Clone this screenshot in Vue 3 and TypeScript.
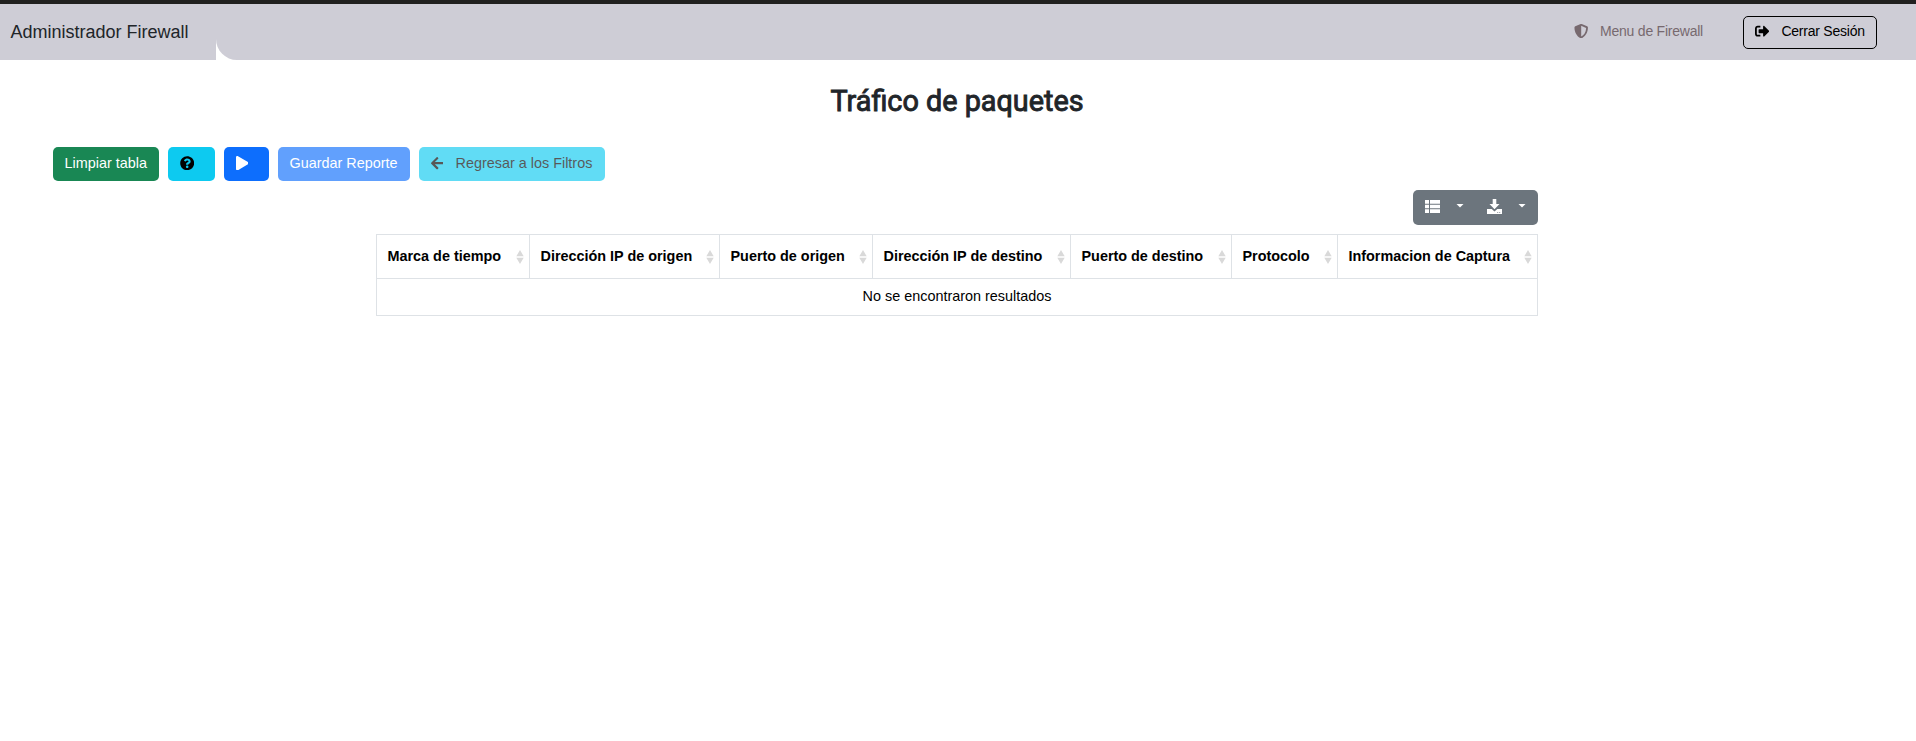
<script setup lang="ts">
const columns: { label: string; width: number }[] = [
  { label: 'Marca de tiempo', width: 153 },
  { label: 'Dirección IP de origen', width: 190 },
  { label: 'Puerto de origen', width: 153 },
  { label: 'Dirección IP de destino', width: 198 },
  { label: 'Puerto de destino', width: 161 },
  { label: 'Protocolo', width: 106 },
  { label: 'Informacion de Captura', width: 200 },
]
</script>

<template>
  <div class="page">
    <header class="topbar">
      <div class="brand">Administrador Firewall</div>
      <div class="nav-wrap">
        <nav class="nav">
          <a class="nav-link">
            <svg class="icon" viewBox="0 0 512 512"><path d="M466.500 83.700l-192-80a48.150 48.150 0 0 0-36.900 0l-192 80C27.700 91.100 16 108.600 16 128c0 198.500 114.500 335.700 221.500 380.300 11.800 4.900 25.100 4.900 36.900 0C360.100 472.600 496 349.300 496 128c0-19.400-11.700-36.900-29.500-44.300zM256.100 446.300l-.1-381 175.900 73.300c-3.300 151.400-82.100 261.100-175.800 307.700z" /></svg>
            <span>Menu de Firewall</span>
          </a>
          <button class="btn logout">
            <svg class="icon" viewBox="0 0 512 512"><path d="M497 273L329 441c-15 15-41 4.500-41-17v-96H152c-13.300 0-24-10.700-24-24v-96c0-13.300 10.700-24 24-24h136V88c0-21.400 25.900-32 41-17l168 168c9.300 9.400 9.300 24.600 0 34zM192 436v-40c0-6.600-5.400-12-12-12H96c-17.700 0-32-14.300-32-32V160c0-17.700 14.300-32 32-32h84c6.600 0 12-5.400 12-12V76c0-6.600-5.400-12-12-12H96c-53 0-96 43-96 96v192c0 53 43 96 96 96h84c6.600 0 12-5.400 12-12z" /></svg>
            <span>Cerrar Sesión</span>
          </button>
        </nav>
      </div>
    </header>

    <h1 class="title">Tráfico de paquetes</h1>

    <div class="actions">
      <button class="btn success">Limpiar tabla</button>
      <button class="btn info help" aria-label="Ayuda">
        <svg class="icon" viewBox="0 0 512 512"><path d="M504 256c0 136.997-111.043 248-248 248S8 392.997 8 256C8 119.083 119.043 8 256 8s248 111.083 248 248zM262.655 90c-54.497 0-89.255 22.957-116.549 63.758-3.536 5.286-2.353 12.415 2.715 16.258l34.699 26.310c5.205 3.947 12.621 3.008 16.665-2.122 17.864-22.658 30.113-35.797 57.303-35.797 20.429 0 45.698 13.148 45.698 32.958 0 14.976-12.363 22.667-32.534 33.976C247.128 238.528 216 254.941 216 296v4c0 6.627 5.373 12 12 12h56c6.627 0 12-5.373 12-12v-1.333c0-28.462 83.186-29.647 83.186-106.667 0-58.002-60.165-102-116.531-102zM256 338c-25.365 0-46 20.635-46 46 0 25.364 20.635 46 46 46s46-20.636 46-46c0-25.364-20.635-46-46-46z" /></svg>
      </button>
      <button class="btn primary play" aria-label="Iniciar">
        <svg class="icon play-icon" viewBox="0 0 448 512"><path d="M424.400 214.700L72.400 6.600C43.800-10.300 0 6.100 0 47.900V464c0 37.500 40.700 60.100 72.400 41.300l352-208c31.400-18.500 31.500-64.100 0-82.600z" /></svg>
      </button>
      <button class="btn primary save" disabled>Guardar Reporte</button>
      <button class="btn info back" disabled>
        <svg class="icon back-icon" viewBox="0 0 448 512"><path d="M257.500 445.100l-22.200 22.200c-9.400 9.400-24.600 9.400-33.900 0L7 273c-9.400-9.400-9.400-24.600 0-33.900L201.400 44.700c9.400-9.400 24.600-9.400 33.900 0l22.200 22.200c9.500 9.500 9.300 25-.4 34.300L136.600 216H424c13.300 0 24 10.700 24 24v32c0 13.300-10.700 24-24 24H136.600l120.500 114.800c9.800 9.300 10 24.800.4 34.300z" /></svg>
        <span>Regresar a los Filtros</span>
      </button>
    </div>

    <main class="table-area">
      <div class="toolbar">
        <div class="tool-group">
          <button class="tool" aria-label="Columnas">
            <svg class="tool-icon" viewBox="0 0 15 14"><path d="M0 .5h4v3.700H0zM5 .5h10v3.700H5zM0 5.200h4v3.600H0zM5 5.200h10v3.600H5zM0 9.800h4v3.700H0zM5 9.800h10v3.700H5z" /></svg>
            <span class="caret"></span>
          </button>
          <button class="tool" aria-label="Exportar">
            <svg class="tool-icon" viewBox="0 0 15 15"><path d="M5.700 0h3.600v5h3.200L7.500 10.300 2.500 5h3.200zM0 10h4.700l2.800 2.600L10.300 10H15v5H0zM10.200 12.900v.8h1v-.8zm2 0v.8h1v-.8z" fill-rule="evenodd" /></svg>
            <span class="caret"></span>
          </button>
        </div>
      </div>
      <table class="table">
        <colgroup>
          <col v-for="c in columns" :key="c.label" :style="{ width: c.width + 'px' }" />
        </colgroup>
        <thead>
          <tr>
            <th v-for="c in columns" :key="c.label">
              <div class="th-inner">
                <span>{{ c.label }}</span>
                <svg class="sort" viewBox="0 0 8 14"><path d="M4 0L7.700 6.300H.3zM4 14L.3 7.700h7.400z" /></svg>
              </div>
            </th>
          </tr>
        </thead>
        <tbody>
          <tr>
            <td :colspan="columns.length">No se encontraron resultados</td>
          </tr>
        </tbody>
      </table>
    </main>
  </div>
</template>

<style>
body {
  margin: 0;
  background: #fff;
}
</style>

<style scoped>
.page,
.page * {
  box-sizing: border-box;
}
.page {
  min-height: 741px;
  font-family: 'Liberation Sans', Arial, sans-serif;
  font-size: 14.4px;
  line-height: 21px;
  color: #212529;
}
.topbar {
  display: flex;
  height: 60px;
  border-top: 4px solid #20201f;
}
.brand {
  width: 216px;
  padding: 15px 0 0 10.5px;
  background: #cecdd6;
  font-size: 18px;
  line-height: 26px;
  white-space: nowrap;
}
.nav-wrap {
  flex: 1;
  background: #fff;
}
.nav {
  display: flex;
  justify-content: flex-end;
  height: 56px;
  padding: 12px 39px 0 0;
  border-bottom-left-radius: 21px;
  background: #cecdd6;
  font-size: 14px;
  letter-spacing: -0.23px;
}
.nav-link {
  display: flex;
  align-items: center;
  gap: 12px;
  height: 30px;
  margin-right: 40px;
  color: #77696f;
}
.icon {
  width: 14.4px;
  height: 14.4px;
  flex: none;
  fill: currentColor;
}
.btn {
  display: flex;
  align-items: center;
  height: 34px;
  padding: 0 11.500px 2px;
  border: 0;
  border-radius: 5px;
  font: inherit;
  letter-spacing: inherit;
  white-space: nowrap;
}
.logout {
  width: 134px;
  height: 33px;
  padding: 0 0 2px 11px;
  gap: 12px;
  border: 1px solid #000;
  background: transparent;
  color: #000;
}
.title {
  margin: 24px 0 0;
  padding-right: 2px;
  font-family: Roboto, sans-serif;
  font-size: 28.8px;
  font-weight: 400;
  line-height: 34px;
  text-align: center;
  -webkit-text-stroke: 0.9px currentColor;
}
.actions {
  display: flex;
  gap: 9px;
  margin: 29px 0 0 53px;
}
.success {
  width: 106px;
  background: #198754;
  color: #fff;
}
.info {
  background: #0dcaf0;
  color: #000;
}
.primary {
  background: #0d6efd;
  color: #fff;
}
.help {
  width: 47px;
}
.play {
  width: 45px;
}
.play-icon {
  width: 12.6px;
}
.save {
  width: 132px;
}
.back {
  width: 186px;
  gap: 12.5px;
}
.back-icon {
  width: 12.6px;
}
.btn:disabled {
  opacity: 0.65;
}
.table-area {
  width: 1162px;
  margin: 9px 0 0 376px;
}
.toolbar {
  display: flex;
  justify-content: flex-end;
}
.tool-group {
  display: flex;
  width: 125px;
  height: 35px;
  border-radius: 5px;
  background: #6c757d;
}
.tool {
  display: flex;
  align-items: center;
  gap: 16px;
  width: 62px;
  padding: 0 0 2px 12px;
  border: 0;
  background: transparent;
}
.tool-icon {
  width: 15px;
  height: 15px;
  fill: #fff;
}
.caret {
  width: 8px;
  height: 4px;
  margin-top: -2px;
  background: #fff;
  clip-path: polygon(0 0, 100% 0, 50% 100%);
}
.table {
  width: 1162px;
  margin-top: 9px;
  table-layout: fixed;
  border-collapse: collapse;
  color: #000;
}
th,
td {
  border: 1px solid #dee2e6;
}
th {
  height: 44px;
  padding: 0 5px 0 10.5px;
  text-align: left;
}
.th-inner {
  display: flex;
  align-items: center;
  justify-content: space-between;
  white-space: nowrap;
}
.sort {
  width: 8px;
  height: 14px;
  fill: #d9d9d9;
}
td {
  height: 37px;
  padding: 0 0 1px;
  text-align: center;
}
</style>
